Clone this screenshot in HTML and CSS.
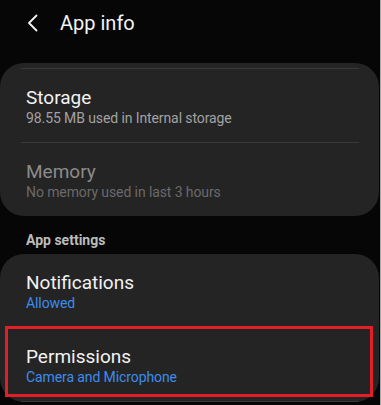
FILE: index.html
```html
<!DOCTYPE html>
<html>
<head>
<meta charset="utf-8">
<link rel="stylesheet" href="styles.css">
</head>
<body>
<div class="screen">
  <header class="header">
    <svg class="back" width="12" height="18" viewBox="0 0 12 18">
      <polyline points="9.5,1.5 2,9 9.5,16.5" fill="none" stroke="#f2f2f2" stroke-width="1.8" stroke-linecap="round" stroke-linejoin="round"/>
    </svg>
    <h1 class="title">App info</h1>
  </header>

  <section class="card card-top">
    <div class="divider"></div>
    <div class="row">
      <div class="row-title">Storage</div>
      <div class="row-sub">98.55 MB used in Internal storage</div>
    </div>
    <div class="divider"></div>
    <div class="row row-dim">
      <div class="row-title">Memory</div>
      <div class="row-sub">No memory used in last 3 hours</div>
    </div>
  </section>

  <div class="section-label">App settings</div>

  <section class="card">
    <div class="row">
      <div class="row-title">Notifications</div>
      <div class="row-sub row-blue">Allowed</div>
    </div>
    <div class="divider"></div>
    <div class="row row-marked">
      <div class="row-title">Permissions</div>
      <div class="row-sub row-blue">Camera and Microphone</div>
      <div class="highlight"></div>
    </div>
    <div class="divider"></div>
  </section>
</div>
</body>
</html>
```

FILE: styles.css
```css
html, body {
  margin: 0;
  padding: 0;
  background: #060606;
  font-family: Roboto, "Noto Sans", "Liberation Sans", sans-serif;
}

.screen {
  width: 380px;
  height: 405px;
  overflow: hidden;
  border-right: 1px solid #a9a9a9;
  background: #060606;
}

.header {
  height: 63px;
  box-sizing: border-box;
  padding-top: 11px;
  padding-left: 27px;
  display: flex;
  align-items: flex-start;
}

.back {
  display: block;
  margin-top: 3px;
  margin-right: 21px;
}

.title {
  margin: 0;
  font-size: 20px;
  line-height: 24px;
  font-weight: 400;
  color: #f4f4f4;
}

.card {
  background: #242424;
  border-radius: 24px;
  margin-right: 1px;
  overflow: visible;
}

.card-top {
  padding-top: 5px;
  border-radius: 24px;
}

.divider {
  height: 1px;
  background: #393939;
  margin: 0 20px 0 21px;
}

.row {
  height: 73px;
  box-sizing: border-box;
  padding: 18px 26px 0 26px;
  position: relative;
}

.row-title {
  font-size: 19px;
  line-height: 22px;
  color: #f2f2f2;
}

.row-sub {
  font-size: 14px;
  line-height: 19px;
  color: #a2a2a2;
  letter-spacing: -0.1px;
}

.row-dim .row-title {
  color: #8b8b8b;
}

.row-dim .row-sub {
  color: #6a6a6a;
}

.row-blue {
  color: #3d8ced;
}

.section-label {
  padding: 16px 26px 5px 26px;
  font-size: 14px;
  line-height: 17px;
  font-weight: 700;
  color: #bcbcbc;
}

.highlight {
  position: absolute;
  left: 5px;
  right: 6px;
  top: -2px;
  bottom: 4px;
  border: 3px solid #e41e26;
  pointer-events: none;
}
```
